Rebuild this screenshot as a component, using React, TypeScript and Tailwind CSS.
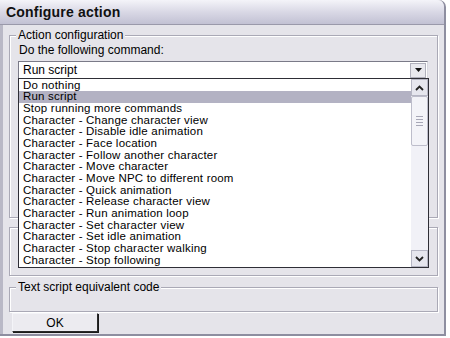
const items = [
  "Do nothing",
  "Run script",
  "Stop running more commands",
  "Character - Change character view",
  "Character - Disable idle animation",
  "Character - Face location",
  "Character - Follow another character",
  "Character - Move character",
  "Character - Move NPC to different room",
  "Character - Quick animation",
  "Character - Release character view",
  "Character - Run animation loop",
  "Character - Set character view",
  "Character - Set idle animation",
  "Character - Stop character walking",
  "Character - Stop following",
];

const font = { fontFamily: '"Liberation Sans", Arial, sans-serif' };

const ArrowDown = () => (
  <svg width="9" height="6" viewBox="0 0 9 6">
    <path d="M1 1h7L4.5 5z" fill="#111" />
  </svg>
);

const Chevron = ({ up }: { up?: boolean }) => (
  <svg width="9" height="6" viewBox="0 0 9 6">
    <path
      d={up ? "M1 5L4.5 1.5L8 5" : "M1 1L4.5 4.5L8 1"}
      fill="none"
      stroke="#222"
      strokeWidth="1.8"
    />
  </svg>
);

const App = () => {
  return (
    <div className="w-[450px] h-[338px] bg-white overflow-hidden" style={font}>
      <div className="relative w-[446px] h-[336px] bg-[#e5e4ea] border-r-2 border-b-2 border-[#8e8ea0] rounded-tr-[7px] flex flex-col">
        {/* title bar */}
        <div className="h-[25px] shrink-0 rounded-tr-[7px] bg-gradient-to-b from-[#f4f4f9] via-[#d9d8e5] to-[#c2c1d3] border-b border-[#9a99aa] flex items-center pl-[6px]">
          <span className="text-[14px] font-bold text-[#111] tracking-[0.2px]">Configure action</span>
        </div>

        <div className="flex-1 border-l-[3px] border-[#b9b8c6] pl-[6px] pr-[6px] flex flex-col">
          {/* Action configuration */}
          <div className="relative mt-[10px] h-[183px] border border-[#aaa9b6] shadow-[inset_1px_1px_0_#fff,1px_1px_0_#fff]">
            <span className="absolute -top-[8px] left-[6px] px-[2px] bg-[#e5e4ea] text-[12px] leading-[14px] text-black">
              Action configuration
            </span>
            <div className="pl-[9px] pt-[7px] text-[12px] leading-[14px] text-black">Do the following command:</div>
            <div className="ml-[8px] mt-[4px] w-[410px] h-[18px] bg-white border border-[#7a7a88] border-r-[#d8d8e0] border-b-[#d8d8e0] flex items-center justify-between">
              <span className="pl-[4px] text-[12px] text-black">Run script</span>
              <div className="w-[16px] h-[15px] mr-[1px] bg-[#e8e8ee] border border-[#b0b0bc] flex items-center justify-center">
                <ArrowDown />
              </div>
            </div>
          </div>

          {/* hidden group */}
          <div className="mt-[9px] h-[49px] border border-[#aaa9b6] shadow-[inset_1px_1px_0_#fff,1px_1px_0_#fff]" />

          {/* Text script equivalent code */}
          <div className="relative mt-[11px] h-[25px] border border-[#aaa9b6] shadow-[inset_1px_1px_0_#fff,1px_1px_0_#fff]">
            <span className="absolute -top-[8px] left-[6px] px-[2px] bg-[#e5e4ea] text-[12px] leading-[14px] text-black">
              Text script equivalent code
            </span>
          </div>

          <button
            type="button"
            className="mt-[1px] ml-[3px] w-[86px] h-[19px] bg-[#ecebf0] border border-[#2a2a2a] border-l-[#f4f4f8] border-t-[#f4f4f8] shadow-[1px_1px_0_#1a1a1a] text-[12px] text-black flex items-center justify-center"
          >
            OK
          </button>
        </div>

        {/* dropdown list */}
        <div className="absolute left-[18px] top-[78px] w-[411px] h-[190px] bg-white border border-[#2e2e36] flex">
          <ul className="flex-1 pt-[0.5px]">
            {items.map((t, i) => (
              <li
                key={i}
                className={`h-[11.7px] leading-[11.7px] pl-[4px] text-[11.5px] tracking-[0.2px] text-black whitespace-nowrap ${
                  i === 1 ? "bg-[#b3b2c3]" : ""
                }`}
              >
                {t}
              </li>
            ))}
          </ul>
          <div className="w-[17px] h-full bg-[#f1f1f7] flex flex-col justify-between">
            <div className="flex flex-col">
              <div className="h-[17px] bg-[#e6e6ee] border border-[#b6b6c4] flex items-center justify-center">
                <Chevron up />
              </div>
              <div className="h-[50px] bg-[#f3f3f8] border border-[#bdbdcb] rounded-[2px] flex flex-col items-center justify-center gap-[2px]">
                <div className="w-[7px] h-px bg-[#a6a6b6]" />
                <div className="w-[7px] h-px bg-[#a6a6b6]" />
                <div className="w-[7px] h-px bg-[#a6a6b6]" />
                <div className="w-[7px] h-px bg-[#a6a6b6]" />
              </div>
            </div>
            <div className="h-[17px] bg-[#e6e6ee] border border-[#b6b6c4] flex items-center justify-center">
              <Chevron />
            </div>
          </div>
        </div>
      </div>
    </div>
  );
};

export default App;
